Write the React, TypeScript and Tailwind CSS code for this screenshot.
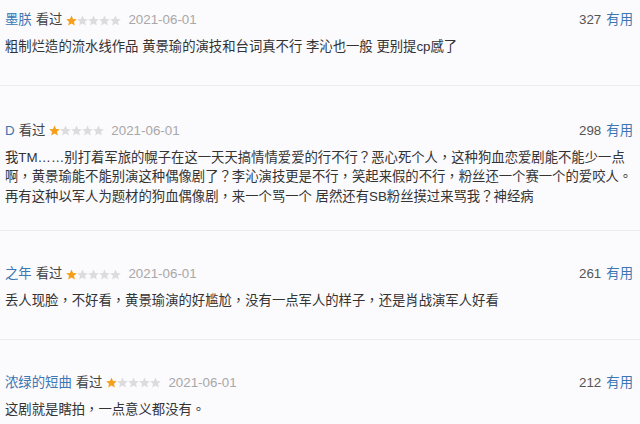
import React from 'react';

interface Review {
  user: string;
  count: number;
  lines: string[];
}

const reviews: Review[] = [
  {
    user: '墨朕',
    count: 327,
    lines: ['粗制烂造的流水线作品 黄景瑜的演技和台词真不行 李沁也一般 更别提cp感了'],
  },
  {
    user: 'D',
    count: 298,
    lines: [
      '我TM……别打着军旅的幌子在这一天天搞情情爱爱的行不行？恶心死个人，这种狗血恋爱剧能不能少一点',
      '啊，黄景瑜能不能别演这种偶像剧了？李沁演技更是不行，笑起来假的不行，粉丝还一个赛一个的爱咬人。',
      '再有这种以军人为题材的狗血偶像剧，来一个骂一个 居然还有SB粉丝摸过来骂我？神经病',
    ],
  },
  {
    user: '之年',
    count: 261,
    lines: ['丢人现脸，不好看，黄景瑜演的好尴尬，没有一点军人的样子，还是肖战演军人好看'],
  },
  {
    user: '浓绿的短曲',
    count: 212,
    lines: ['这剧就是瞎拍，一点意义都没有。'],
  },
];

const Star = ({ on }: { on: boolean }) => (
  <svg width="11" height="11" viewBox="1 1.2 22 21" className="shrink-0">
    <path
      d="M12 1.5l3.1 7.1 7.6.6-5.8 5 1.8 7.5L12 17.8l-6.7 3.9 1.8-7.5-5.8-5 7.6-.6z"
      fill={on ? '#f5a01a' : '#dcdcdf'}
    />
  </svg>
);

const Stars = ({ rating }: { rating: number }) => (
  <div className="flex items-center">
    {[1, 2, 3, 4, 5].map((i) => (
      <Star key={i} on={i <= rating} />
    ))}
  </div>
);

const ReviewItem = ({ review, index }: { review: Review; index: number }) => {
  // the list is cropped at the top, and the long comment sits a little tighter
  const pad =
    index === 0 ? 'pt-[10px] pb-[28px]' : index === 1 ? 'pt-[35px] pb-[24px]' : 'pt-[33px] pb-[28px]';

  return (
    <div className={`border-b border-[#ececef] pl-[5px] pr-[7px] ${pad}`}>
      {/* header */}
      <div className="flex h-5 items-center justify-between text-[13.35px]">
        <div className="flex items-center">
          <span className="text-[#3c76b3]">{review.user}</span>
          <span className="ml-1 text-[#444]">看过</span>
          <span className="ml-1">
            <Stars rating={1} />
          </span>
          <span className="ml-[7px] text-[#a8a8a8]">2021-06-01</span>
        </div>
        <div className="flex items-center gap-[5px]">
          <span className="text-[#555]">{review.count}</span>
          <span className="text-[#3c76b3]">有用</span>
        </div>
      </div>

      {/* body */}
      <div className="mt-[7px] text-[13.35px] leading-[19.5px] text-[#333]">
        {review.lines.map((line, i) => (
          <div key={i} className="whitespace-nowrap">
            {line}
          </div>
        ))}
      </div>
    </div>
  );
};

export default function App() {
  return (
    <div
      className="h-[424px] w-[640px] overflow-hidden bg-[#fbfafd]"
      style={{ fontFamily: '"Liberation Sans", "Noto Sans CJK TC", sans-serif' }}
    >
      {reviews.map((r, i) => (
        <ReviewItem key={r.user} review={r} index={i} />
      ))}
    </div>
  );
}
